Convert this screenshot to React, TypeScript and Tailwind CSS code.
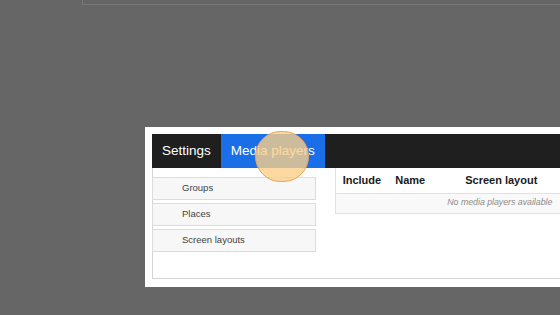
import React from "react";

const sideItems = ["Groups", "Places", "Screen layouts"];

export default function App() {
  return (
    <div className="relative w-[560px] h-[315px] overflow-hidden bg-[#666666] font-['Liberation_Sans',Arial,sans-serif]">
      {/* edge of the window above */}
      <div className="ml-[82px] h-[5px] border-l border-b border-[#777777] bg-[#656565]" />

      {/* settings panel */}
      <div className="ml-[145px] mt-[122px] w-[520px] h-[160px] bg-white pl-[7px] pt-[7px]">
        <div className="h-[145px] border border-[#d4d4d4] border-t-0 flex flex-col">
          {/* tab bar */}
          <div className="h-[34px] bg-[#1f1f1f] flex items-stretch text-white text-[13.5px] -ml-px">
            <div className="px-[10px] flex items-center">Settings</div>
            <div className="px-[10px] flex items-center bg-[#1a6fe8]">Media players</div>
          </div>

          <div className="flex flex-1 -ml-px">
            {/* side menu */}
            <div className="w-[164px] pt-[9px] flex flex-col gap-[3px]">
              {sideItems.map((s) => (
                <div
                  key={s}
                  className="h-[23px] bg-[#f7f7f7] border border-[#dcdcdc] pl-[29px] flex items-center text-[9.5px] text-[#3f3f3f]"
                >
                  {s}
                </div>
              ))}
            </div>

            {/* players table */}
            <div className="ml-[19px] w-[330px]">
              <table className="w-full border-collapse border-l border-[#e2e2e2]">
                <thead>
                  <tr className="h-[25px] text-[11px] font-bold text-[#1a1a1a] text-left">
                    <th className="pl-[7px] pr-[7px] w-[52px]">Include</th>
                    <th className="pl-[7px] w-[70px]">Name</th>
                    <th className="pl-[7px]">Screen layout</th>
                  </tr>
                </thead>
                <tbody>
                  <tr className="h-[20px] bg-[#f9f9f9] border-t border-b border-[#e2e2e2]">
                    <td colSpan={3} className="text-center italic text-[8.75px] text-[#8a8a8a]">
                      No media players available
                    </td>
                  </tr>
                </tbody>
              </table>
            </div>
          </div>
        </div>
      </div>

      {/* click highlight */}
      <div className="absolute left-[255px] top-[131px] w-[54px] h-[51px] rounded-full bg-[#facf88]/80 border border-[#e9a45a]" />
    </div>
  );
}
